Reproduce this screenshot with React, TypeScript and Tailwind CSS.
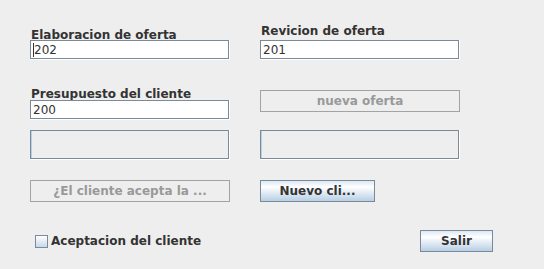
import React from "react";

const font = { fontFamily: '"DejaVu Sans", "Liberation Sans", sans-serif' };

function Field({ value, caret }: { value: string; caret?: boolean }) {
  return (
    <div className="w-[200px] h-[20px] flex border-r border-b border-white">
      <div className="flex-1 flex items-center border border-[#7a8a99] bg-white pl-[2px] text-[12px] leading-[14px] text-[#333333]">
        {caret && <span className="w-px h-[14px] bg-[#333333] mr-0"></span>}
        <span>{value}</span>
      </div>
    </div>
  );
}

function EmptyField() {
  return (
    <div className="w-[200px] h-[30px] flex border-r border-b border-white">
      <div className="flex-1 border border-[#7a8a99] bg-[#eeeeee] flex">
        <div className="w-px bg-[#b8cfe5]"></div>
      </div>
    </div>
  );
}

function DisabledButton({ label, w }: { label: string; w: string }) {
  return (
    <div
      className={`${w} h-[22px] border border-[#a3a3a3] bg-[#eeeeee] flex items-center justify-center text-[12px] font-bold text-[#999999] leading-[14px]`}
    >
      {label}
    </div>
  );
}

function Button({ label, w }: { label: string; w: string }) {
  return (
    <div
      className={`${w} h-[22px] border border-[#7a8a99] bg-[linear-gradient(to_bottom,#dde8f3_0%,#ffffff_30%,#b8cfe5_100%)] flex items-center justify-center text-[12px] font-bold text-[#333333] leading-[14px]`}
    >
      {label}
    </div>
  );
}

export default function App() {
  return (
    <div
      className="w-[544px] h-[269px] bg-[#eeeeee] flex flex-col text-[#333333] overflow-hidden"
      style={font}
    >
      <div className="flex pl-[30px] gap-[30px]">
        <div className="flex flex-col w-[200px] pt-[28px]">
          <div className="h-[12px] leading-[14px] text-[12px] font-bold pl-[1px] whitespace-nowrap">
            Elaboracion de oferta
          </div>
          <Field value="202" caret />
          <div className="mt-[27px] h-[13px] leading-[14px] text-[12px] font-bold pl-[1px] whitespace-nowrap">
            Presupuesto del cliente
          </div>
          <Field value="200" />
          <div className="mt-[10px]">
            <EmptyField />
          </div>
          <div className="mt-[20px]">
            <DisabledButton label="¿El cliente acepta la ..." w="w-[200px]" />
          </div>
        </div>
        <div className="flex flex-col w-[200px] pt-[24px]">
          <div className="h-[16px] leading-[14px] text-[12px] font-bold pl-[1px] whitespace-nowrap">
            Revicion de oferta
          </div>
          <Field value="201" />
          <div className="mt-[30px]">
            <DisabledButton label="nueva oferta" w="w-[200px]" />
          </div>
          <div className="mt-[18px]">
            <EmptyField />
          </div>
          <div className="mt-[20px]">
            <Button label="Nuevo cli..." w="w-[115px]" />
          </div>
        </div>
      </div>
      <div className="mt-[28px] h-[22px] flex items-center">
        <div className="ml-[35px] w-[13px] h-[13px] border border-[#7a8a99] bg-[linear-gradient(to_bottom,#ffffff_0%,#c8d8ea_100%)]"></div>
        <div className="ml-[3px] text-[12px] font-bold leading-[14px] whitespace-nowrap">
          Aceptacion del cliente
        </div>
        <div className="ml-auto mr-[51px]">
          <Button label="Salir" w="w-[73px]" />
        </div>
      </div>
    </div>
  );
}
